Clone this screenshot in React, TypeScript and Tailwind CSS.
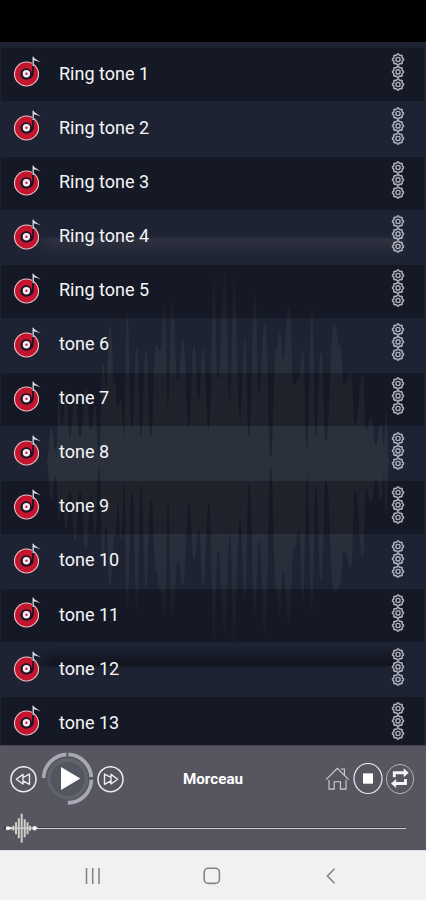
import { useState } from 'react'

const TONES = [
  ...[1, 2, 3, 4, 5].map((n) => `Ring tone ${n}`),
  ...[6, 7, 8, 9, 10, 11, 12, 13].map((n) => `tone ${n}`),
]

// [x, top, bottom] of the waveform behind the list, peaks and valleys in turn
const WAVE: [number, number, number][] = [
  [47, 460, 464], [51, 428, 500], [56, 452, 476], [59, 395, 520], [62, 425, 500],
  [66, 390, 530], [70, 438, 490], [75, 395, 540], [80, 438, 490], [86, 388, 550],
  [91, 430, 495], [95, 405, 535], [99, 458, 467], [103, 362, 560], [106, 385, 525],
  [110, 325, 585], [115, 385, 535], [118, 408, 505], [121, 400, 540], [124, 436, 482],
  [127, 312, 608], [132, 428, 490], [137, 345, 612], [141, 438, 486], [146, 350, 590],
  [151, 438, 498], [156, 345, 570], [160, 350, 590], [165, 305, 612], [168, 408, 500],
  [172, 302, 614], [178, 380, 560], [183, 340, 585], [189, 428, 503], [194, 345, 560],
  [199, 400, 530], [203, 348, 588], [209, 430, 502], [214, 278, 640], [218, 380, 550],
  [225, 274, 634], [230, 402, 535], [234, 278, 642], [240, 418, 520], [245, 338, 600],
  [249, 438, 482], [255, 292, 614], [259, 395, 540], [265, 322, 634], [271, 458, 466],
  [276, 350, 590], [280, 330, 614], [283, 360, 570], [289, 306, 624], [294, 385, 550],
  [299, 378, 530], [303, 350, 606], [307, 450, 476], [312, 308, 610], [316, 436, 485],
  [321, 352, 582], [326, 442, 480], [334, 325, 592], [340, 345, 586], [344, 385, 550],
  [351, 373, 568], [355, 425, 490], [363, 375, 556], [366, 430, 488], [371, 418, 502],
  [376, 446, 480], [381, 424, 500], [384, 446, 476], [386, 412, 515], [389, 460, 464],
]

// leaves each point flat and narrows towards it, so peaks stay thin
function curve(points: number[][]) {
  return points
    .slice(1)
    .map(([x, y], i) => {
      const [px, py] = points[i]!
      const mid = (px! + x!) / 2
      return `C${mid} ${py} ${mid} ${y} ${x} ${y}`
    })
    .join('')
}

const TOP = WAVE.map(([x, t]) => [x, t])
const BOTTOM = WAVE.map(([x, , b]) => [x, b]).reverse()
const WAVE_PATH = `M${TOP[0]!.join(' ')}${curve(TOP)}L${BOTTOM[0]!.join(' ')}${curve(BOTTOM)}Z`

const GEAR_PATH =
  Array.from({ length: 32 }, (_, i) => {
    const r = i % 4 < 2 ? 5.5 : 4.6
    const a = ((i - 0.5) * Math.PI) / 16
    return `${i === 0 ? 'M' : 'L'}${(6.5 + r * Math.sin(a)).toFixed(2)} ${(6.5 - r * Math.cos(a)).toFixed(2)}`
  }).join('') + 'Z'

function Backdrop() {
  return (
    <svg className="absolute inset-0" width="426" height="703" viewBox="0 42 426 703">
      <defs>
        <linearGradient id="wave" x1="0" y1="278" x2="0" y2="640" gradientUnits="userSpaceOnUse">
          <stop offset="0" stopColor="#2f333e" stopOpacity="0.45" />
          <stop offset="0.35" stopColor="#2c313d" stopOpacity="0.9" />
          <stop offset="0.65" stopColor="#2c313d" stopOpacity="0.9" />
          <stop offset="1" stopColor="#2f333e" stopOpacity="0.4" />
        </linearGradient>
        <linearGradient id="glow" x1="0" y1="0" x2="0" y2="1">
          <stop offset="0" stopColor="#2f323f" stopOpacity="0" />
          <stop offset="0.16" stopColor="#2f323f" />
          <stop offset="1" stopColor="#2f323f" stopOpacity="0" />
        </linearGradient>
        <linearGradient id="shade" x1="0" y1="0" x2="0" y2="1">
          <stop offset="0" stopColor="#10121b" stopOpacity="0" />
          <stop offset="0.85" stopColor="#10121b" stopOpacity="0.9" />
          <stop offset="1" stopColor="#10121b" stopOpacity="0" />
        </linearGradient>
        <linearGradient id="sides" x1="0" y1="0" x2="1" y2="0">
          <stop offset="0" stopColor="black" />
          <stop offset="0.06" stopColor="white" />
          <stop offset="0.97" stopColor="white" />
          <stop offset="1" stopColor="black" />
        </linearGradient>
        <mask id="fade" maskUnits="userSpaceOnUse" x="30" y="220" width="378" height="460">
          <rect x="30" y="220" width="378" height="460" fill="url(#sides)" />
        </mask>
      </defs>
      <path d={WAVE_PATH} fill="url(#wave)" />
      <g mask="url(#fade)">
        <rect x="30" y="236" width="378" height="22" fill="url(#glow)" />
        <rect x="30" y="646" width="378" height="22" fill="url(#shade)" />
      </g>
    </svg>
  )
}

function DiscIcon() {
  return (
    <svg width="30" height="36" viewBox="12 55 30 36" fill="none">
      <circle cx="26.5" cy="75" r="12" fill="#c3162e" stroke="#e9c3c9" strokeWidth="1.1" />
      <circle cx="26.2" cy="75" r="5.8" fill="#1b1426" />
      <path d="M33 64V73C33 77 31 79 28 79" stroke="#1b1426" strokeWidth="1.7" />
      <circle cx="26.4" cy="74.8" r="3.7" fill="#f4eef0" />
      <circle cx="26.5" cy="74.8" r="1.2" fill="#d8203a" />
      <path d="M33.2 67V58" stroke="#dfe1e8" strokeWidth="1.3" />
      <path d="M32.6 56.8L34.5 59.2L40.8 63.4L37 62L33.8 61.2Z" fill="#e6e8ee" />
    </svg>
  )
}

function Gears() {
  return (
    <svg width="14" height="39" viewBox="0 0 14 39" fill="none" stroke="#aeb2bc" strokeLinejoin="round">
      {[0, 12.4, 25].map((y) => (
        <g key={y} transform={`translate(0.5 ${y})`}>
          <path d={GEAR_PATH} strokeWidth="1.5" />
          <circle cx="6.5" cy="6.5" r="2.1" strokeWidth="1.4" />
        </g>
      ))}
    </svg>
  )
}

function SkipIcon({ forward = false }: { forward?: boolean }) {
  return (
    <svg
      width="27"
      height="27"
      viewBox="0 0 27 27"
      fill="none"
      stroke="#ececf0"
      strokeLinejoin="round"
      className={forward ? '-scale-x-100' : ''}
    >
      <circle cx="13.5" cy="13.2" r="12.5" strokeWidth="1.5" />
      <path
        d="M6.3 13.2L13 8.4V11.5L19.5 8.1V18.3L13 14.9V18ZM13 11.5V14.9"
        strokeWidth="1.4"
      />
    </svg>
  )
}

function PlayIcon() {
  return (
    <svg width="52" height="54" viewBox="42 751.5 52 54" fill="none">
      <circle cx="67.7" cy="778.3" r="18.7" fill="#54565f" stroke="#5f646b" strokeWidth="3.6" />
      <g stroke="#a6a9b4" strokeWidth="3.7">
        <path d="M43.6 777.5A24.4 24.4 0 0 1 66.4 753.9" />
        <path d="M68.4 753.9A24.2 24.2 0 0 1 91.3 776.5" />
        <path d="M91.4 779.2A23.8 23.8 0 0 1 67.8 802.4" />
      </g>
      <path d="M61 766.4L80.3 778L61 789.6Z" fill="#fff" />
    </svg>
  )
}

function HomeIcon() {
  return (
    <svg width="25" height="25" viewBox="325 766.5 25 25" fill="none" stroke="#cfcfd5" strokeWidth="1.1">
      <path d="M326 779.2L337.3 767.8L348.7 779.2" />
      <path d="M340.8 768.5H344.4V774.6" />
      <path d="M329 779.5V788.6H334.2V781.3H340.4V788.6H346V779.5" />
    </svg>
  )
}

function StopIcon() {
  return (
    <svg width="30" height="32" viewBox="353 763 30 32" fill="none">
      <ellipse cx="368" cy="778.5" rx="14" ry="15" stroke="#e8e8ec" strokeWidth="1.2" />
      <path d="M363 773.3H373V783.7H363Z" fill="#fff" />
    </svg>
  )
}

function RepeatIcon() {
  return (
    <svg width="28" height="31" viewBox="386 763.5 28 31" fill="none">
      <ellipse cx="400" cy="778.5" rx="13.6" ry="14.6" stroke="#bdbdc5" strokeWidth="0.9" />
      <g stroke="#f3f3f5" strokeWidth="2.9">
        <path d="M394.3 776.8V772.3H404.5" />
        <path d="M405.5 778.5V783H395.5" />
      </g>
      <path d="M403.7 767.7L408.7 772.3L403.7 776.8Z" fill="#f3f3f5" />
      <path d="M396.2 778.5L391 783L396.2 787.5Z" fill="#f3f3f5" />
    </svg>
  )
}

function WaveThumb() {
  const bars = [
    [13.3, 2.5], [16, 6], [18.8, 10], [21.7, 14.5], [24.7, 9], [27.5, 6], [30, 2.5],
  ]
  return (
    <svg width="38" height="30" viewBox="0 0 38 30" className="shrink-0">
      <path d="M6 15.2H38" stroke="#d8d8d6" strokeWidth="1.4" />
      <circle cx="5.6" cy="15.2" r="1.4" fill="#1a1a20" />
      <circle cx="7.6" cy="15.2" r="2" fill="#efefed" />
      <path d="M8 13.4L12 14.4V16L8 17Z" fill="#efefed" />
      <circle cx="34.6" cy="15.2" r="2.3" fill="#f0f0ee" />
      {bars.map(([x, h]) => (
        <path key={x} d={`M${x} ${15.2 - h!}V${15.2 + h!}`} stroke="#cdcec8" strokeWidth="2" />
      ))}
    </svg>
  )
}

function Player({ title }: { title: string }) {
  return (
    <footer className="flex h-[105px] shrink-0 flex-col border-t border-[#44434f] bg-[#575660]">
      <div className="flex h-[66px] items-center pl-[10px] pr-[12px]">
        <button aria-label="Previous">
          <SkipIcon />
        </button>
        <button aria-label="Play" className="ml-[5px]">
          <PlayIcon />
        </button>
        <button aria-label="Next" className="ml-[3px]">
          <SkipIcon forward />
        </button>
        <p className="flex-1 pl-[59px] pt-px text-[15.2px] font-bold text-white">{title}</p>
        <div className="flex items-center">
          <HomeIcon />
          <span className="ml-[3px]">
            <StopIcon />
          </span>
          <span className="ml-[3px]">
            <RepeatIcon />
          </span>
        </div>
      </div>
      <div className="flex h-[32px] items-center">
        <WaveThumb />
        <div className="mr-[20px] h-[2px] flex-1 border-t border-[#3f3e49] bg-[#cbcbd0]" />
      </div>
    </footer>
  )
}

function NavBar() {
  return (
    <nav className="flex h-[50px] shrink-0 items-center border-t border-[#dadae2] bg-[#f1f1f1] pl-[84px] text-[#858585]">
      <svg width="18" height="18" viewBox="0 0 18 18" stroke="currentColor" strokeWidth="1.6">
        <path d="M2.5 1V17M8.7 1V17M15 1V17" />
      </svg>
      <svg
        width="18"
        height="18"
        viewBox="0 0 18 18"
        fill="none"
        stroke="currentColor"
        strokeWidth="1.6"
        className="ml-[101px]"
      >
        <rect x="1.2" y="1.2" width="15.2" height="15.2" rx="4.2" />
      </svg>
      <svg
        width="12"
        height="18"
        viewBox="0 0 12 18"
        fill="none"
        stroke="currentColor"
        strokeWidth="1.6"
        className="ml-[104px]"
      >
        <path d="M9.6 1.8L2.4 9L9.6 16.2" />
      </svg>
    </nav>
  )
}

export default function App() {
  const [title] = useState('Morceau')

  return (
    <div className="flex h-[900px] w-[426px] flex-col overflow-hidden bg-black font-['Roboto',sans-serif]">
      <div className="h-[42px] shrink-0 bg-black" />
      <main className="relative h-[703px] shrink-0 overflow-hidden bg-[#1e2333]">
        <Backdrop />
        <ul className="relative flex flex-col gap-[1.08px] pt-[6.4px]">
          {TONES.map((tone, i) => (
            <li
              key={tone}
              className={`ml-px mr-[2px] flex h-[53px] shrink-0 pl-[11px] pr-[19px] ${
                i % 2 === 0 ? 'bg-black/27' : ''
              }`}
            >
              <span className="mt-[6px]">
                <DiscIcon />
              </span>
              <span className="ml-[17px] mt-[11.4px] flex-1 text-[18px] leading-[27px] text-[#f4f5f8]">
                {tone}
              </span>
              <span className="mt-[4.6px]">
                <Gears />
              </span>
            </li>
          ))}
        </ul>
      </main>
      <Player title={title} />
      <NavBar />
    </div>
  )
}
